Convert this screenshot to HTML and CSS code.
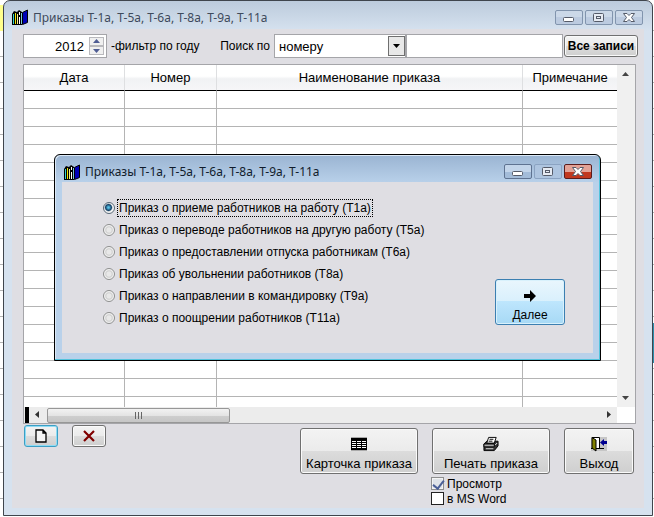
FILE: index.html
```
<!DOCTYPE html>
<html lang="ru">
<head>
    <meta charset="UTF-8">
    <meta name="viewport" content="width=device-width, initial-scale=1.0">
    <title>Приказы Т-1а, Т-5а, Т-6а, Т-8а, Т-9а, Т-11а</title>
    <link rel="stylesheet" href="styles.css">
</head>
<body>
    <svg class="sprite" aria-hidden="true">
        <symbol id="books" viewBox="0 0 16 16">
            <path d="M0 5 2 2 5 3 5 16 0 16Z" fill="#000"/>
            <path d="M1 5h1v10H1z" fill="#35d6d0"/>
            <path d="M3 4h1v11H3z" fill="#e8e800"/>
            <path d="M4 4 7 1 10 3V16H4Z" fill="#000"/>
            <path d="M5 5h1v10H5z" fill="#f4f08a"/>
            <path d="M7 3h1v3H7zM7 8h1v7H7z" fill="#fff"/>
            <path d="M9 4h1v11H9z" fill="#7ac5d8"/>
            <path d="M10.500 3.500 15.500 1V13.500L10.500 15.500Z" fill="#0000b8" stroke="#000"/>
        </symbol>
        <symbol id="min" viewBox="0 0 26 13">
            <rect x="7.500" y="6.500" width="10" height="4" rx="1" fill="#fff" stroke="#555b69"/>
        </symbol>
        <symbol id="max" viewBox="0 0 26 13">
            <rect x="7.500" y="2.500" width="10" height="8" rx="1" fill="#e6ebf3" stroke="#555b69"/>
            <rect x="10.500" y="5.500" width="4" height="2" fill="none" stroke="#555b69"/>
        </symbol>
        <symbol id="close" viewBox="0 0 26 13">
            <path d="M7.500 2.500h3.500l2 2 2-2h3.500l-3 4 3 4h-3.500l-2-2-2 2h-3.500l3-4z" fill="#fff" stroke="#555b69"/>
        </symbol>
    </svg>

    <div class="window">
        <header class="titlebar">
            <svg class="app-icon"><use href="#books"/></svg>
            <h1>Приказы Т-1а, Т-5а, Т-6а, Т-8а, Т-9а, Т-11а</h1>
            <div class="controls">
                <button aria-label="Свернуть"><svg><use href="#min"/></svg></button>
                <button aria-label="Развернуть"><svg><use href="#max"/></svg></button>
                <button aria-label="Закрыть"><svg><use href="#close"/></svg></button>
            </div>
        </header>

        <main class="client">
            <div class="filter">
                <div class="spinner">
                    <input type="text" id="year" value="2012">
                    <div class="spin-buttons">
                        <button aria-label="Больше"><svg viewBox="0 0 13 7"><path d="M3 5 6.500 1 10 5z"/></svg></button>
                        <button aria-label="Меньше"><svg viewBox="0 0 13 7"><path d="M3 2 6.500 6 10 2z"/></svg></button>
                    </div>
                </div>
                <label class="year-label" for="year">-фильтр по году</label>
                <label class="search-label" for="field">Поиск по</label>
                <div class="combo">
                    <select id="field">
                        <option>номеру</option>
                    </select>
                    <svg class="combo-arrow" viewBox="0 0 17 20"><rect x=".5" y=".5" width="16" height="19"/><path d="M5 8h7l-3.500 4z"/></svg>
                </div>
                <input class="search" type="text" aria-label="Строка поиска">
                <button class="btn all">Все записи</button>
            </div>

            <div class="grid">
                <table>
                    <colgroup>
                        <col class="c-date">
                        <col class="c-num">
                        <col>
                        <col class="c-note">
                    </colgroup>
                    <thead>
                        <tr><th>Дата</th><th>Номер</th><th>Наименование приказа</th><th>Примечание</th></tr>
                    </thead>
                    <tbody>
                        <tr><td></td><td></td><td></td><td></td></tr>
                        <tr><td></td><td></td><td></td><td></td></tr>
                        <tr><td></td><td></td><td></td><td></td></tr>
                        <tr><td></td><td></td><td></td><td></td></tr>
                        <tr><td></td><td></td><td></td><td></td></tr>
                        <tr><td></td><td></td><td></td><td></td></tr>
                        <tr><td></td><td></td><td></td><td></td></tr>
                        <tr><td></td><td></td><td></td><td></td></tr>
                        <tr><td></td><td></td><td></td><td></td></tr>
                        <tr><td></td><td></td><td></td><td></td></tr>
                        <tr><td></td><td></td><td></td><td></td></tr>
                        <tr><td></td><td></td><td></td><td></td></tr>
                        <tr><td></td><td></td><td></td><td></td></tr>
                        <tr><td></td><td></td><td></td><td></td></tr>
                        <tr><td></td><td></td><td></td><td></td></tr>
                        <tr><td></td><td></td><td></td><td></td></tr>
                        <tr><td></td><td></td><td></td><td></td></tr>
                        <tr class="cut"><td></td><td></td><td></td><td></td></tr>
                    </tbody>
                </table>
                <div class="vscroll">
                    <svg viewBox="0 0 18 18"><path d="M5 11 8.500 7 12 11z"/></svg>
                    <svg viewBox="0 0 18 18"><path d="M5 7 8.500 11 12 7z"/></svg>
                </div>
                <div class="hscroll">
                    <span class="split"></span>
                    <svg viewBox="0 0 18 16"><path d="M10 4 6 7.500 10 11z"/></svg>
                    <span class="thumb"></span>
                    <svg class="right" viewBox="0 0 18 16"><path d="M8 4 12 7.500 8 11z"/></svg>
                </div>
            </div>

            <div class="actions">
                <button class="btn small new" aria-label="Новый"><svg viewBox="0 0 12 14"><path d="M1 1h7l3 3v9H1zM8 1v3h3" fill="#f4f4f4" stroke="#000" stroke-width="1.300"/></svg></button>
                <button class="btn small" aria-label="Удалить"><svg viewBox="0 0 12 14"><path d="M1 2 11 12M11 2 1 12" fill="none" stroke="#800000" stroke-width="2.200"/></svg></button>
                <button class="btn big card">
                    <svg viewBox="0 0 16 16"><path d="M0 1h16v14H0z" fill="#aaa"/><path d="M0 2h16v12H0z"/><path d="M1 5h4v1H1zM6 5h4v1H6zM11 5h4v1h-4zM1 7h4v1H1zM6 7h4v1H6zM11 7h4v1h-4zM1 9h4v1H1zM6 9h4v1H6zM11 9h4v1h-4zM1 11h4v1H1zM6 11h4v1H6zM11 11h4v1h-4z" fill="#fff"/></svg>
                    Карточка приказа
                </button>
                <div class="print">
                    <button class="btn big">
                        <svg viewBox="0 0 17 16"><path d="M1 8 4 5H16V10L12 15H1z" fill="#333" stroke="#000"/><path d="M4 7 6 1H14L12 7z" fill="#fff" stroke="#000"/><path d="M7 3h4M6 5h4" stroke="#000"/><path d="M1 8h11v3H1z" fill="#aaa" stroke="#000"/><path d="M3 13h8" stroke="#ddd"/><path d="M13 9l2-2" stroke="#fff"/></svg>
                        Печать приказа
                    </button>
                    <label class="check"><input type="checkbox" class="soft" checked>Просмотр</label>
                    <label class="check"><input type="checkbox">в MS Word</label>
                </div>
                <button class="btn big exit">
                    <svg viewBox="0 0 16 16"><path d="M0 1h16v14H0z" fill="#c6c6c6"/><path d="M2 2h6v10H2z" fill="#fff"/><path d="M1 1.500h7.500V12M0 12.500h13" fill="none" stroke="#000"/><path d="M1 1.500 5 4V15L1 12z" fill="#808000" stroke="#000"/><path d="M9 6.500 13 3V5h3v3h-3v2z" fill="#000090"/></svg>
                    Выход
                </button>
            </div>
        </main>

        <section class="dialog" role="dialog" aria-labelledby="dialog-title">
            <header class="titlebar">
                <svg class="app-icon"><use href="#books"/></svg>
                <h2 id="dialog-title">Приказы Т-1а, Т-5а, Т-6а, Т-8а, Т-9а, Т-11а</h2>
                <div class="controls">
                    <button aria-label="Свернуть"><svg><use href="#min"/></svg></button>
                    <button class="off" aria-label="Развернуть"><svg><use href="#max"/></svg></button>
                    <button class="red" aria-label="Закрыть"><svg><use href="#close"/></svg></button>
                </div>
            </header>
            <form class="choices">
                <div class="radios">
                    <label><input type="radio" name="order" checked><span>Приказ о приеме работников на работу (Т1а)</span></label>
                    <label><input type="radio" name="order"><span>Приказ о переводе работников на другую работу (Т5а)</span></label>
                    <label><input type="radio" name="order"><span>Приказ о предоставлении отпуска работникам (Т6а)</span></label>
                    <label><input type="radio" name="order"><span>Приказ об увольнении работников (Т8а)</span></label>
                    <label><input type="radio" name="order"><span>Приказ о направлении в командировку (Т9а)</span></label>
                    <label><input type="radio" name="order"><span>Приказ о поощрении работников (Т11а)</span></label>
                </div>
                <button type="button" class="btn big next">
                    <svg viewBox="0 0 16 16"><path d="M2 6h6V2l6 6-6 6v-4H2z"/></svg>
                    Далее
                </button>
            </form>
        </section>
    </div>
</body>
</html>
```
FILE: styles.css
```
* {
    box-sizing: border-box;
}
body {
    margin: 0;
    padding: 0 1px 1px 3px;
    background:
        linear-gradient(#ffff8c, #ffff8c) 0 5px / 3px 26px no-repeat,
        linear-gradient(#2a8fae, #2a8fae) right 323px / 1px 40px no-repeat,
        repeating-linear-gradient(#fff 0 25px, #b4b4b4 25px 26px) 0 5px;
    font-family: "Liberation Sans", Arial, sans-serif;
    font-size: 13px;
    color: #000;
}
.sprite {
    display: none;
}
button, input, select {
    font: inherit;
    color: inherit;
    margin: 0;
    padding: 0;
}
svg {
    display: block;
}
label {
    font-size: 12px;
}
.window {
    position: relative;
    padding: 0 8px 7px;
    border: 1px solid #3f454d;
    border-radius: 7px 7px 0 0;
    background: linear-gradient(#bccbdc, #d6e2ef 30px);
}

/* title bars */
.titlebar {
    display: flex;
    align-items: center;
    height: 28px;
    padding: 4px 1px 0 0;
}
.app-icon {
    width: 16px;
    height: 16px;
    margin-right: 5px;
}
h1, h2 {
    margin: 0;
    font: 12px "Noto Sans", "Open Sans", sans-serif;
    color: #3e4a5c;
}
h2 {
    color: #111c2c;
}
.controls {
    display: flex;
    gap: 2px;
    margin-left: auto;
}
.controls button {
    width: 28px;
    height: 15px;
    border: 1px solid #8194ad;
    border-radius: 2px;
    background: linear-gradient(#cbd8e8 50%, #bccbe0 50%);
}
.controls svg {
    width: 26px;
    height: 13px;
}

/* filter row */
.client {
    padding: 5px 8px 2px 11px;
    background: #dfdee3;
}
.filter {
    display: flex;
    align-items: center;
    height: 24px;
}
.spinner {
    display: flex;
    align-items: center;
    width: 84px;
    height: 24px;
    padding-right: 2px;
    border: 1px solid #a5a5a9;
    background: #fff;
}
.spinner input {
    flex: 1;
    min-width: 0;
    padding-right: 5px;
    border: 0;
    background: none;
    text-align: right;
}
.spin-buttons button {
    display: block;
    width: 15px;
    height: 9px;
    border: 1px solid #b9b9bd;
    background: #f0f0f0;
}
.spin-buttons svg {
    width: 13px;
    height: 7px;
    fill: #4e5c93;
}
.year-label {
    margin-left: 4px;
}
.search-label {
    margin-left: auto;
    margin-right: 4px;
}
.combo {
    position: relative;
    width: 132px;
}
.combo select {
    width: 100%;
    height: 24px;
    padding-left: 4px;
    border: 1px solid #a5a5a9;
    border-radius: 0;
    background: #fff;
    appearance: none;
}
.combo-arrow {
    position: absolute;
    top: 2px;
    right: 1px;
    width: 17px;
    height: 20px;
    pointer-events: none;
}
.combo-arrow rect {
    fill: #e8e8e8;
    stroke: #6f6f6f;
}
.search {
    width: 157px;
    height: 24px;
    border: 1px solid #a5a5a9;
    background: #fff;
}
.btn {
    border: 1px solid #707070;
    border-radius: 3px;
    background: linear-gradient(#f3f3f3, #ebebeb 50%, #dcdcdc 50%, #cfcfcf);
    box-shadow: inset 0 0 0 1px #fafafa;
    white-space: nowrap;
}
.all {
    width: 74px;
    height: 22px;
    margin: 0 -2px 0 1px;
    font-size: 12px;
    font-weight: bold;
}

/* orders table */
.grid {
    display: grid;
    grid-template-columns: 1fr 18px;
    margin-top: 6px;
    border: 1px solid #a5a5a9;
    background: #fff;
}
table {
    width: 100%;
    border-collapse: separate;
    border-spacing: 0;
    table-layout: fixed;
}
.c-date {
    width: 101px;
}
.c-num {
    width: 92px;
}
.c-note {
    width: 94px;
}
th {
    height: 26px;
    padding: 0;
    border-right: 1px solid #dedfe1;
    border-bottom: 1px solid #000;
    background: linear-gradient(#fff 45%, #f1f2f4 55%, #f6f6f8);
    font-weight: normal;
}
td {
    height: 18px;
    padding: 0;
    border-right: 1px solid #b4b4b4;
    border-bottom: 1px solid #b4b4b4;
}
th:last-child, td:last-child {
    border-right: 0;
}
.cut td {
    height: 10px;
    border-bottom: 0;
}
.vscroll {
    display: flex;
    flex-direction: column;
    justify-content: space-between;
    background: #f0f0f0;
}
.vscroll svg {
    width: 18px;
    height: 18px;
    fill: #444;
}
.hscroll {
    display: flex;
    align-items: center;
    height: 16px;
    padding-left: 1px;
    background: #ececec;
}
.hscroll svg {
    width: 18px;
    height: 16px;
    fill: #333;
}
.hscroll .right {
    margin-left: auto;
}
.split {
    width: 4px;
    height: 16px;
    background: #000;
}
.thumb {
    width: 183px;
    height: 15px;
    border: 1px solid #979797;
    border-radius: 2px;
    background:
        repeating-linear-gradient(90deg, #666 0 1px, transparent 1px 3px) center / 8px 7px no-repeat,
        linear-gradient(#f2f2f2, #e4e4e4 50%, #cfcfcf 50%, #c6c6c6);
}

/* bottom buttons */
.actions {
    display: flex;
    align-items: flex-start;
    gap: 14px;
    padding: 1px 2px 0 1px;
}
.small {
    width: 34px;
    height: 22px;
}
.small svg {
    width: 12px;
    height: 14px;
    margin: 0 auto;
}
.new {
    border-color: #3c9fc4;
    box-shadow: inset 0 0 0 1px #8fdcf5;
}
.big {
    display: flex;
    flex-direction: column;
    align-items: center;
    justify-content: flex-end;
    gap: 4px;
    width: 118px;
    height: 46px;
    padding-bottom: 2px;
}
.big svg {
    width: 16px;
    height: 16px;
}
.card, .print, .exit {
    margin-top: 3px;
}
.card {
    margin-left: auto;
}
.big.exit {
    width: 70px;
}
.check {
    display: flex;
    align-items: center;
    height: 15px;
    gap: 3px;
    margin-left: -1px;
}
.print .btn {
    margin-bottom: 2px;
}
.check input {
    appearance: none;
    width: 13px;
    height: 13px;
    border: 1px solid #222;
    background: #fff;
}
.check .soft {
    border-color: #8e8f8f;
    box-shadow: inset 0 0 0 1px #f4f4f4;
    background: #dfe3e8;
}
.check .soft:checked::before {
    content: "";
    display: block;
    width: 5px;
    height: 9px;
    margin-left: 3px;
    border: solid #4a5f97;
    border-width: 0 2px 2px 0;
    transform: rotate(38deg);
}

/* order type dialog */
.dialog {
    position: absolute;
    top: 153px;
    left: 50px;
    right: 51px;
    padding: 0 7px 7px;
    border: 1px solid #000;
    border-radius: 6px 6px 0 0;
    background: linear-gradient(#9ab4d2, #b9d1ea 28px, #b9d1ea);
    box-shadow: inset -1px -1px 0 #53c3dc, inset 1px 1px 0 #dce9f6;
}
.dialog .titlebar {
    height: 27px;
    padding: 6px 1px 0 2px;
}
.dialog .controls button {
    border-color: #5f7391;
    background: linear-gradient(#c3d5ea 50%, #a3bcd9 50%);
}
.dialog .controls .off {
    border-color: #8ba3c2;
    background: #aec5e0;
}
.dialog .controls .red {
    border-color: #5b1c1c;
    background: linear-gradient(#e3a296 50%, #c1381f 50%);
}
.choices {
    display: flex;
    justify-content: space-between;
    align-items: flex-end;
    padding: 15px 28px 24px 41px;
    background: #dfdee3;
}
.radios label {
    display: flex;
    align-items: center;
    height: 22px;
    gap: 2px;
}
.radios input {
    appearance: none;
    width: 12px;
    height: 12px;
    border: 1px solid #8e8f8f;
    border-radius: 50%;
    background: radial-gradient(#e8e8e8 30%, #cfcfcf 45%, #f4f4f4 65%);
}
.radios input:checked {
    border-color: #5a6a78;
    background: radial-gradient(circle at 45% 45%, #58c4ea 0 8%, #123f66 38%, #f4f4f4 55%);
}
.radios span {
    padding: 1px;
    border: 1px dotted transparent;
}
.radios input:checked + span {
    border-color: #000;
}
.next {
    width: 70px;
    margin-bottom: 4px;
    border-color: #3c7fb1;
    background: linear-gradient(#e9f6fd, #d9f0fc 48%, #bee6fd 48%, #a7d9f5);
    box-shadow: inset 0 0 0 1px #d8f1fc;
    font-size: 12px;
}
```
